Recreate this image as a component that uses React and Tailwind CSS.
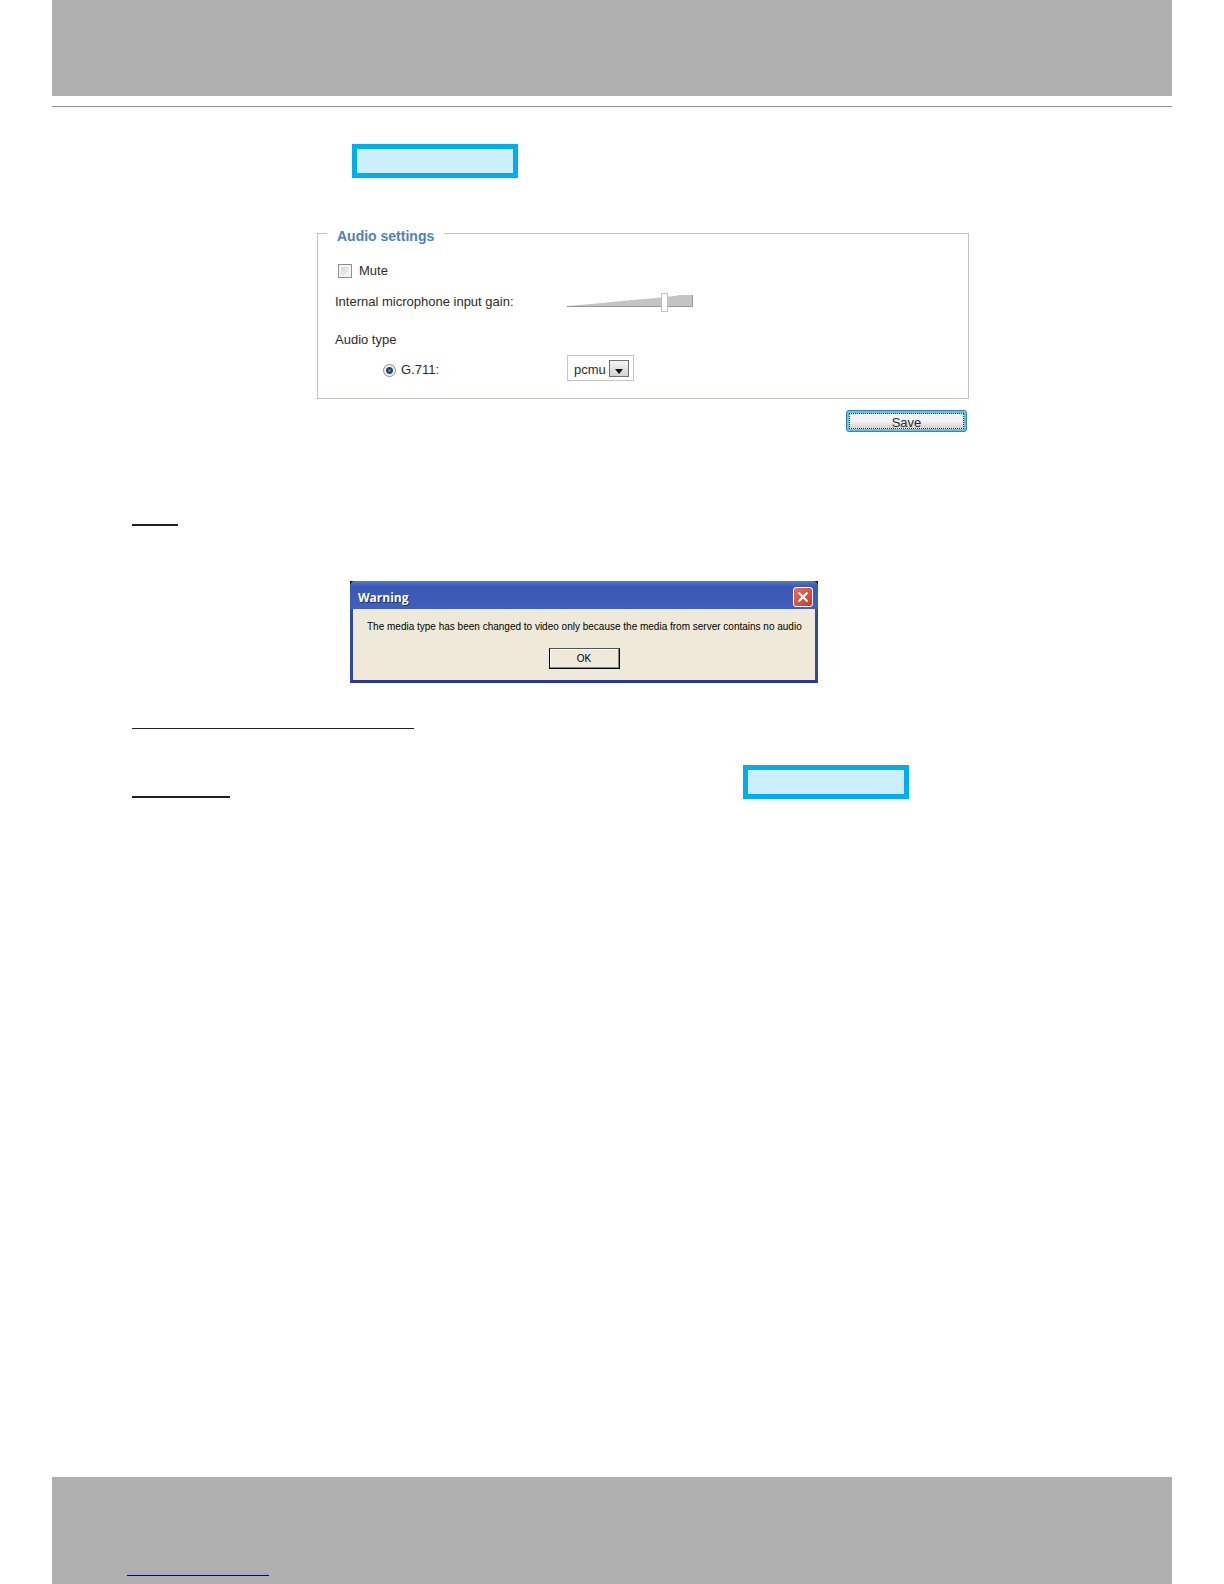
import React, { useState } from 'react';

const Callout = () => (
    <div className="h-[34px] w-[166px] shrink-0 border-[5px] border-[#00aeef] bg-[#cbeffc]" />
);

const GainSlider = ({ value, onChange }) => (
    <div className="relative h-5 w-[126px]">
        <svg className="absolute inset-0 h-5 w-full" viewBox="0 0 126 20" aria-hidden="true">
            <path
                d="M0 14 L18 12.5 L40 10.5 L60 8.5 L84 6.5 L108 4 L112 3 L126 3 L126 15 L0 15 Z"
                fill="#c4c4c4"
            />
            <path d="M0 14.5 H125.5 V3" fill="none" stroke="#999" />
        </svg>
        <input
            id="gain"
            type="range"
            min="0"
            max="100"
            value={value}
            onChange={e => onChange(e.target.value)}
            className="absolute inset-0 m-0 h-5 w-full appearance-none bg-transparent [&::-webkit-slider-thumb]:h-[19px] [&::-webkit-slider-thumb]:w-[7px] [&::-webkit-slider-thumb]:appearance-none [&::-webkit-slider-thumb]:border [&::-webkit-slider-thumb]:border-[#c2c2c2] [&::-webkit-slider-thumb]:bg-white"
        />
    </div>
);

const AudioSettings = () => {
    const [mute, setMute] = useState(false);
    const [gain, setGain] = useState(79);
    const [codec, setCodec] = useState('pcmu');

    return (
        <form
            className="mt-[42px] ml-[265px] max-w-[652px] font-['Liberation_Sans',sans-serif] text-[13px] leading-4 text-[#2e2a2a]"
            onSubmit={e => e.preventDefault()}
        >
            <fieldset className="border border-[#c6c3bf] px-[17px] pb-[17px]">
                <legend className="-ml-2 px-[10px] pt-[6px] text-[14px] leading-5 font-bold text-[#4f80c4]">
                    Audio settings
                </legend>

                <div className="mt-[17px] flex items-center">
                    <input
                        id="mute"
                        type="checkbox"
                        checked={mute}
                        onChange={e => setMute(e.target.checked)}
                        className="ml-[3px] h-[14px] w-[14px] appearance-none border border-[#8e8f8f] bg-linear-to-br from-[#cfd1d4] to-[#f8f8f8] shadow-[inset_0_0_0_2px_#f4f4f4] checked:bg-[#4f80c4]"
                    />
                    <label htmlFor="mute" className="ml-[7px]">Mute</label>
                </div>

                <div className="mt-[13px] flex items-center">
                    <label htmlFor="gain" className="w-[232px]">Internal microphone input gain:</label>
                    <GainSlider value={gain} onChange={setGain} />
                </div>

                <div className="mt-5">Audio type</div>

                <div className="mt-[7px] flex items-end">
                    <div className="flex w-[232px] items-center pb-[3px] pl-12">
                        <input
                            id="g711"
                            type="radio"
                            name="audioType"
                            defaultChecked
                            className="h-[13px] w-[13px] appearance-none rounded-full border border-[#8e8f8f] bg-[radial-gradient(circle,#7fb2d4_0,#1c4260_2px,#2b4a66_3px,#eceeef_4px)]"
                        />
                        <label htmlFor="g711" className="ml-[5px]">G.711:</label>
                    </div>
                    <div className="relative h-[26px] w-[67px] border border-[#c3c6cc]">
                        <select
                            aria-label="G.711"
                            value={codec}
                            onChange={e => setCodec(e.target.value)}
                            className="h-full w-full appearance-none bg-transparent pt-[3px] pl-[6px]"
                        >
                            <option value="pcmu">pcmu</option>
                            <option value="pcma">pcma</option>
                        </select>
                        <span className="pointer-events-none absolute top-1 right-1 flex h-[17px] w-5 items-end justify-center border border-[#6f6f6f] bg-linear-to-b from-[#f4f4f4] to-[#d3d3d3] pb-[2px]">
                            <svg width="8" height="5" viewBox="0 0 8 5" aria-hidden="true">
                                <path d="M0 0 H8 L4 5 Z" fill="#111" />
                            </svg>
                        </span>
                    </div>
                </div>
            </fieldset>

            <div className="mt-[11px] flex justify-end pr-[2px]">
                <button
                    type="submit"
                    className="h-[22px] w-[121px] rounded-[3px] border border-[#3c7fb1] bg-[#5fc3ea] p-[2px]"
                >
                    <span className="flex h-full justify-center border border-dotted border-[#333] bg-linear-to-b from-[#f3f3f3] from-50% to-[#d4d4d4] leading-[18px]">
                        Save
                    </span>
                </button>
            </div>
        </form>
    );
};

const WarningDialog = () => (
    <div
        role="dialog"
        aria-labelledby="warning-title"
        className="mt-[55px] ml-[298px] max-w-[468px] border-x-[3px] border-b-[3px] border-x-[#3048a8] border-b-[#283890] bg-[#061018]"
    >
        <div className="-mx-[3px] bg-[#061018]">
            <div className="flex h-7 items-center rounded-t-[5px] bg-linear-to-b from-[#4a80c8] from-0% via-[#3a58b4] via-20% to-[#4060bc] pt-1 pr-[5px] pl-2">
                <h2
                    id="warning-title"
                    className="flex-1 pt-px font-['Open_Sans',sans-serif] text-[12px] leading-5 font-bold text-white [text-shadow:1px_1px_#1c2c70]"
                >
                    Warning
                </h2>
                <button
                    type="button"
                    aria-label="Close"
                    className="flex h-5 w-5 items-center justify-center rounded-[3px] border border-white bg-linear-to-br from-[#e8705a] to-[#cc3420]"
                >
                    <svg width="12" height="12" viewBox="0 0 12 12" aria-hidden="true">
                        <path d="M1.5 1.5 L10.5 10.5 M10.5 1.5 L1.5 10.5" stroke="#fff" strokeWidth="2.2" />
                    </svg>
                </button>
            </div>
        </div>
        <div className="bg-[#eee9d8] px-[14px] pt-[10px] pb-[11px] font-['Liberation_Sans',sans-serif] text-[10px] leading-4 text-black">
            <p className="whitespace-nowrap">
                The media type has been changed to video only because the media from server contains no audio
            </p>
            <button
                type="button"
                className="mx-auto mt-[13px] block h-[21px] w-[71px] border border-t-[#555] border-r-black border-b-black border-l-black shadow-[inset_-1px_-1px_#8c887c,inset_1px_1px_#fff]"
            >
                OK
            </button>
        </div>
    </div>
);

export default function App() {
    return (
        <div className="flex min-h-screen flex-col bg-white px-[52px]">
            <header>
                <div className="h-24 bg-[#b0b0b0]" />
                <hr className="mt-[10px] border-t border-[#939393]" />
            </header>

            <main className="flex-1 pb-10">
                <div className="mt-[37px] ml-[300px]">
                    <Callout />
                </div>

                <AudioSettings />

                <section className="mt-[92px] ml-20">
                    <hr className="w-[46px] border-t-2 border-[#231f20]" />
                </section>

                <WarningDialog />

                <section className="mt-[45px] ml-20">
                    <hr className="w-[282px] border-t border-[#231f20]" />
                    <div className="mt-9 flex items-end">
                        <div className="w-[611px]">
                            <hr className="mb-px w-[98px] border-t-2 border-[#231f20]" />
                        </div>
                        <Callout />
                    </div>
                </section>
            </main>

            <footer className="flex h-[107px] items-end bg-[#b0b0b0] pb-2 pl-[75px]">
                <a
                    href="#manual"
                    aria-label="Manual"
                    className="block h-[3px] w-[142px] border-b border-[#0000a8] bg-[#a3a3ee]"
                />
            </footer>
        </div>
    );
}
